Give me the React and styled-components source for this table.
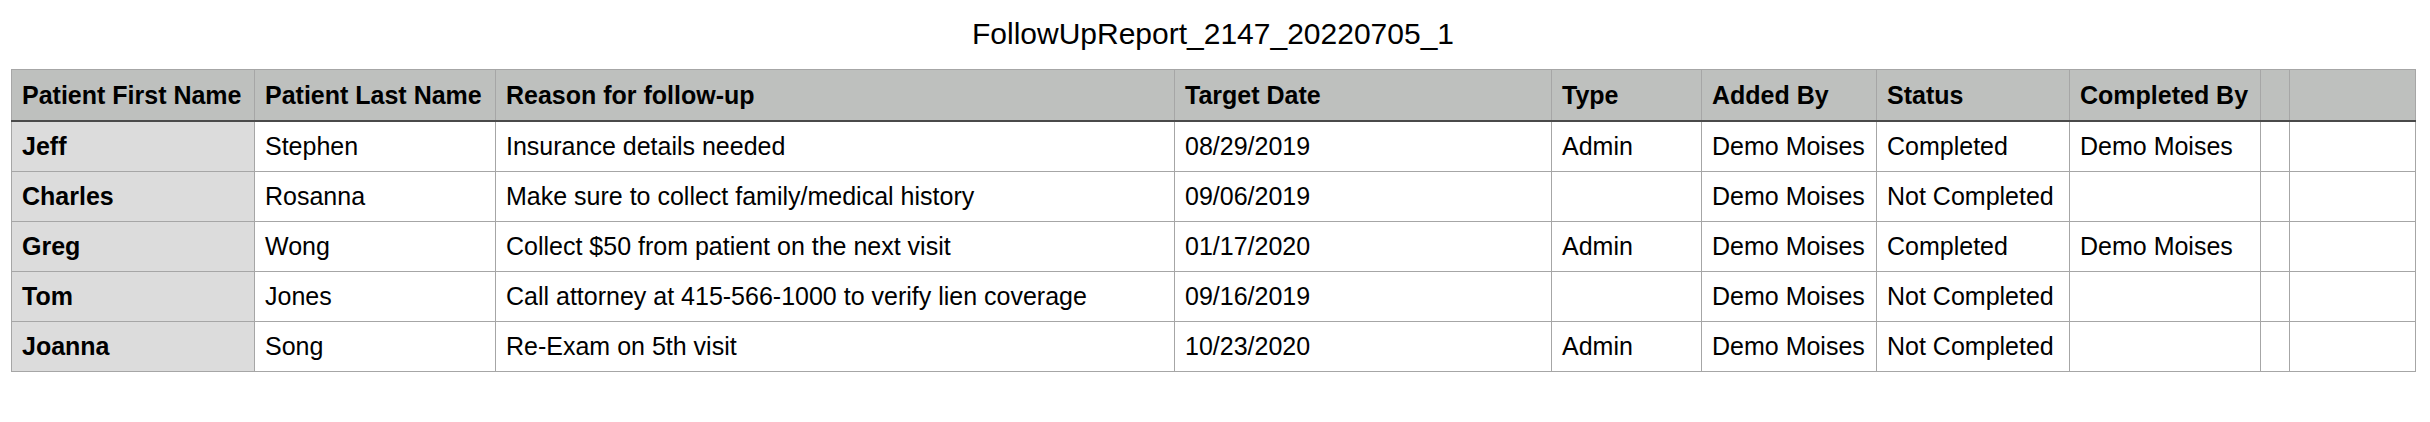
import React from 'react';
import styled, { createGlobalStyle } from 'styled-components';

const GlobalStyle = createGlobalStyle`
    html, body {
        margin: 0;
        padding: 0;
        background: #fff;
    }
    body {
        font-family: 'Liberation Sans', Arial, Helvetica, sans-serif;
        color: #000;
    }
`;

const Page = styled.div`
    padding: 0 0 0 11px;
`;

const Title = styled.h1`
    margin: 0;
    padding-top: 17px;
    height: 52px;
    box-sizing: border-box;
    line-height: 34px;
    font-size: 30px;
    font-weight: normal;
    text-align: center;
    width: 2404px;
    margin-bottom: 17px;
`;

const Table = styled.table`
    border-collapse: collapse;
    table-layout: fixed;
    width: 2404px;
    font-size: 25px;
`;

const HeadCell = styled.th`
    height: 50px;
    padding: 0 10px;
    text-align: left;
    font-weight: bold;
    background: #bec0be;
    border: 1px solid #a6a6a6;
    border-bottom: 2px solid #4a4a4a;
    white-space: nowrap;
    overflow: hidden;
`;

const Cell = styled.td`
    height: 49px;
    padding: 0 10px;
    text-align: left;
    border: 1px solid #a6a6a6;
    white-space: nowrap;
    overflow: hidden;
    font-weight: ${p => (p.$lead ? 'bold' : 'normal')};
    background: ${p => (p.$lead ? '#dcdcdc' : '#fff')};
`;

const widths = [243, 241, 679, 377, 150, 175, 193, 191, 29, 126];

const headers = [
    'Patient First Name',
    'Patient Last Name',
    'Reason for follow-up',
    'Target Date',
    'Type',
    'Added By',
    'Status',
    'Completed By',
    '',
    '',
];

const rows = [
    ['Jeff', 'Stephen', 'Insurance details needed', '08/29/2019', 'Admin', 'Demo Moises', 'Completed', 'Demo Moises'],
    ['Charles', 'Rosanna', 'Make sure to collect family/medical history', '09/06/2019', '', 'Demo Moises', 'Not Completed', ''],
    ['Greg', 'Wong', 'Collect $50 from patient on the next visit', '01/17/2020', 'Admin', 'Demo Moises', 'Completed', 'Demo Moises'],
    ['Tom', 'Jones', 'Call attorney at 415-566-1000 to verify lien coverage', '09/16/2019', '', 'Demo Moises', 'Not Completed', ''],
    ['Joanna', 'Song', 'Re-Exam on 5th visit', '10/23/2020', 'Admin', 'Demo Moises', 'Not Completed', ''],
];

const App = () => {
    return (
        <Page>
            <GlobalStyle />
            <Title>FollowUpReport_2147_20220705_1</Title>
            <Table>
                <colgroup>
                    {widths.map((w, i) => (
                        <col key={i} style={{ width: w }} />
                    ))}
                </colgroup>
                <thead>
                    <tr>
                        {headers.map((h, i) => (
                            <HeadCell key={i}>{h}</HeadCell>
                        ))}
                    </tr>
                </thead>
                <tbody>
                    {rows.map((r, ri) => (
                        <tr key={ri}>
                            {[...r, '', ''].map((c, ci) => (
                                <Cell key={ci} $lead={ci === 0}>
                                    {c}
                                </Cell>
                            ))}
                        </tr>
                    ))}
                </tbody>
            </Table>
        </Page>
    );
};

export default App;
